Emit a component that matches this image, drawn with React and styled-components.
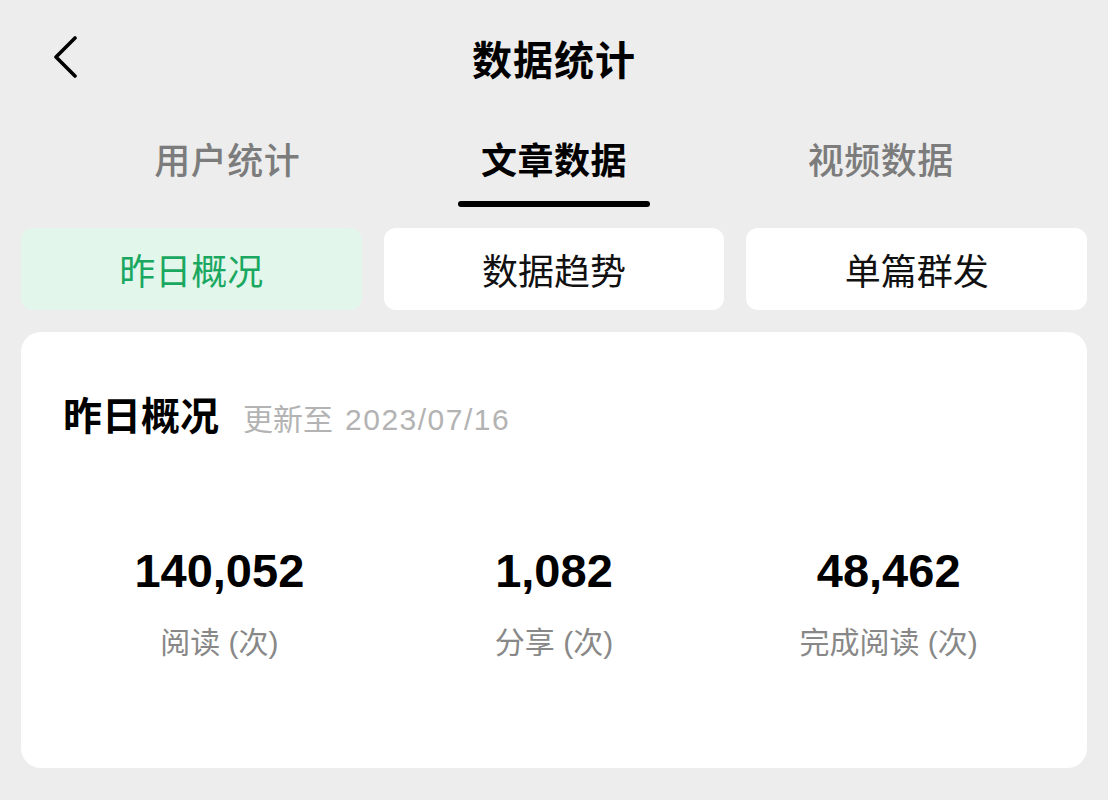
import React from "react";
import styled, { createGlobalStyle } from "styled-components";

const GlobalStyle = createGlobalStyle`
  html, body {
    margin: 0;
    padding: 0;
    background: #ecedec;
  }
  body {
    font-family: "Liberation Sans", "Noto Sans CJK SC", sans-serif;
    color: #000;
  }
`;

const Page = styled.div`
  width: 1108px;
  height: 800px;
  padding: 0 21px;
  box-sizing: border-box;
  overflow: hidden;
`;

const Header = styled.div`
  height: 116px;
  display: grid;
  grid-template-columns: 1fr auto 1fr;
  align-items: center;
`;

const BackButton = styled.button`
  background: none;
  border: none;
  padding: 0;
  margin-left: 31px;
  width: 32px;
  height: 48px;
  display: flex;
  align-items: center;
  cursor: pointer;
  justify-self: start;
`;

const Title = styled.h1`
  margin: 0;
  font-size: 40px;
  font-weight: 700;
  letter-spacing: 1px;
`;

const TabRow = styled.div`
  display: grid;
  grid-template-columns: repeat(3, 1fr);
  padding: 22px 43px 0;
`;

const Tab = styled.div`
  display: flex;
  flex-direction: column;
  align-items: center;
  font-size: 36px;
  line-height: 48px;
  font-weight: ${(p) => (p.$active ? 700 : 500)};
  color: ${(p) => (p.$active ? "#000" : "#7c7c7c")};
  letter-spacing: 0.5px;
`;

const Underline = styled.div`
  margin-top: 15px;
  width: 192px;
  height: 6px;
  border-radius: 3px;
  background: ${(p) => (p.$show ? "#000" : "transparent")};
`;

const Segments = styled.div`
  display: grid;
  grid-template-columns: repeat(3, 1fr);
  gap: 22px;
  margin-top: 21px;
`;

const Segment = styled.div`
  height: 82px;
  border-radius: 12px;
  display: flex;
  align-items: center;
  justify-content: center;
  font-size: 36px;
  background: ${(p) => (p.$active ? "#e2f6ec" : "#fff")};
  color: ${(p) => (p.$active ? "#1aa860" : "#111")};
`;

const Card = styled.div`
  margin-top: 22px;
  height: 436px;
  background: #fff;
  border-radius: 20px;
  padding-top: 60px;
  box-sizing: border-box;
`;

const CardHead = styled.div`
  display: flex;
  align-items: baseline;
  gap: 24px;
  padding-left: 42px;
  height: 50px;
`;

const CardTitle = styled.h2`
  margin: 0;
  font-size: 39px;
  line-height: 50px;
  font-weight: 700;
`;

const Updated = styled.span`
  font-size: 30px;
  color: #b3b3b3;
`;

const UpdatedDate = styled.span`
  margin-left: 12px;
  letter-spacing: 1.5px;
`;

const Stats = styled.div`
  display: grid;
  grid-template-columns: repeat(3, 1fr);
  padding: 0 31px;
  margin-top: 101px;
`;

const Stat = styled.div`
  display: flex;
  flex-direction: column;
  align-items: center;
`;

const Value = styled.div`
  font-size: 47px;
  line-height: 56px;
  font-weight: 700;
`;

const Label = styled.div`
  margin-top: 24px;
  font-size: 30px;
  line-height: 40px;
  color: #888;
`;

const tabs = ["用户统计", "文章数据", "视频数据"];
const segments = ["昨日概况", "数据趋势", "单篇群发"];
const stats = [
  { value: "140,052", label: "阅读 (次)" },
  { value: "1,082", label: "分享 (次)" },
  { value: "48,462", label: "完成阅读 (次)" },
];

export default function App() {
  return (
    <Page>
      <GlobalStyle />
      <Header>
        <BackButton aria-label="返回">
          <svg width="28" height="44" viewBox="0 0 28 44" fill="none">
            <path
              d="M23 2 L4 21 L23 40"
              stroke="#000"
              strokeWidth="3.6"
              strokeLinecap="round"
              strokeLinejoin="round"
            />
          </svg>
        </BackButton>
        <Title>数据统计</Title>
        <div />
      </Header>
      <TabRow>
        {tabs.map((t, i) => (
          <Tab key={t} $active={i === 1}>
            {t}
            <Underline $show={i === 1} />
          </Tab>
        ))}
      </TabRow>
      <Segments>
        {segments.map((s, i) => (
          <Segment key={s} $active={i === 0}>
            {s}
          </Segment>
        ))}
      </Segments>
      <Card>
        <CardHead>
          <CardTitle>昨日概况</CardTitle>
          <Updated>
            更新至<UpdatedDate>2023/07/16</UpdatedDate>
          </Updated>
        </CardHead>
        <Stats>
          {stats.map((s) => (
            <Stat key={s.label}>
              <Value>{s.value}</Value>
              <Label>{s.label}</Label>
            </Stat>
          ))}
        </Stats>
      </Card>
    </Page>
  );
}
